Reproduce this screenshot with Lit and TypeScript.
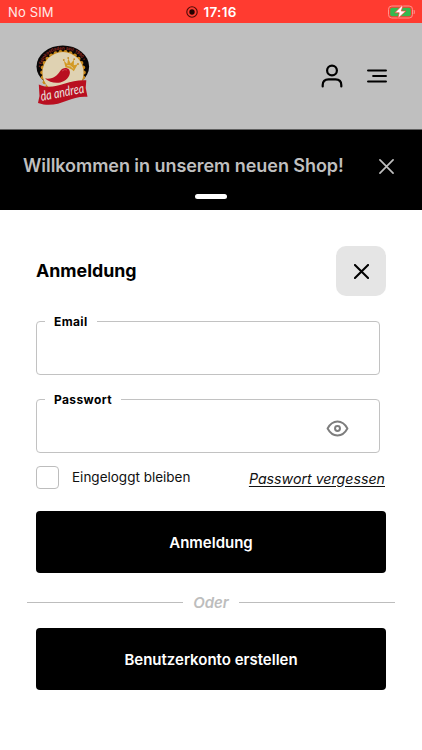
import { LitElement, html, css, svg } from "lit";
import { customElement, property } from "lit/decorators.js";

const cross = (size: number, width: number) => html`<svg width=${size} height=${size} viewBox="0 0 16 16" fill="none" stroke="currentColor" stroke-width=${width} stroke-linecap="round"><path d="M1 1L15 15M15 1L1 15"/></svg>`;

@customElement("shop-logo")
export class ShopLogo extends LitElement {
  static styles = css`
    :host { display: block; width: 54px; height: 62px; }
    svg { display: block; overflow: visible; }
    .arc { font: 700 4.6px "Open Sans", sans-serif; fill: #8f2a20; }
    .name { font: italic 500 13.5px "Lato", sans-serif; fill: #e6dcd8; }
  `;
  render() {
    const bumps = Array.from({ length: 26 }, (_, i) => {
      const a = (i * Math.PI) / 13;
      return svg`<circle cx=${27 + 20.8 * Math.cos(a)} cy=${27.6 + 20.8 * Math.sin(a)} r="2" fill="#c98a1d"/>`;
    });
    return html`<svg width="54" height="62" viewBox="0 0 54 62">
      <defs><path id="arc" d="M4.8 22.5C8 9.500 16 4.700 27 4.700S46 9.500 49.200 22.500"/></defs>
      <ellipse cx="26.800" cy="21.500" rx="26.300" ry="21" fill="#090606"/>
      <text class="arc"><textPath href="#arc" textLength="55">• Feinkostladen seit 1990 •</textPath></text>
      ${bumps}
      <circle cx="27" cy="27.600" r="21" fill="#c98a1d"/>
      <circle cx="27" cy="27.600" r="20.500" fill="#dfd2b2"/>
      <path d="M9 33.500C18 34.500 21 30.500 24 26.300C26.500 22.500 30.500 22 33 24.500C35.500 28 32.500 33.500 28 36C22 39.300 14 38 9 33.500Z" fill="#b90f20"/>
      <path d="M26 26Q29 23.700 31 25" stroke="#d95862" stroke-width=".7" fill="none"/>
      <path d="M29.500 22.500L27.800 15.500L31.200 19L32.200 13.500L34.700 18.500L38 14.700L37.800 20.300L41.800 19.300L37.800 26.200Q34 22.500 29.500 22.500Z" fill="#d39a25"/>
      <path d="M31.300 20.500L34.500 21L37.300 23.500" stroke="#dfd2b2" stroke-width=".9" fill="none"/>
      <g fill="#c98a1d"><circle cx="27.800" cy="15" r=".9"/><circle cx="32.200" cy="13" r=".9"/><circle cx="38.200" cy="14.200" r=".9"/><circle cx="42" cy="19" r=".9"/></g>
      <path d="M2.800 39.500C18 47 31 34 50.300 35.300L49.700 43L51.500 51.800C34 50 22 65 2 58L3.500 51Z" fill="#b90f20"/>
      <text class="name" transform="translate(5.500 56) rotate(-11)" textLength="44" lengthAdjust="spacingAndGlyphs">da andrea</text>
    </svg>`;
  }
}

@customElement("outlined-field")
export class OutlinedField extends LitElement {
  @property() label = "";
  static styles = css`
    :host { display: block; }
    .box { box-sizing: border-box; width: 344px; height: 62px; margin: 0; padding: 0 30px 2px 8px; border: 1px solid #c2c2c2; border-radius: 4px; display: flex; align-items: center; justify-content: flex-end; }
    .label { padding: 1px 9px 0; font: 700 12px/15px Inter, sans-serif; letter-spacing: .38px; color: #000; }
  `;
  render() {
    return html`<fieldset class="box"><legend class="label">${this.label}</legend><slot></slot></fieldset>`;
  }
}

@customElement("app-root")
export class AppRoot extends LitElement {
  static styles = css`
    :host { display: block; width: 422px; height: 750px; overflow: hidden; background: #fff; font-family: Inter, sans-serif; color: #000; }
    svg { display: block; }
    .status { height: 23px; box-sizing: border-box; background: #ff3b30; color: #fff; display: grid; grid-template-columns: 1fr auto 1fr; align-items: center; padding: 1px 7px 0 8px; font-size: 13px; }
    .carrier { color: #ffe9e7; letter-spacing: .15px; }
    .clock { display: flex; align-items: center; gap: 5px; font-weight: 600; font-size: 13.5px; letter-spacing: .3px; }
    .battery { justify-self: end; }
    .header { height: 107px; box-sizing: border-box; background: #bfbfbf; border-bottom: 1px solid #606060; display: flex; align-items: center; padding: 0 35px 0 36px; }
    .logo { margin-bottom: 1px; }
    .tools { margin: 0 0 1px auto; display: flex; align-items: center; gap: 24px; }
    .banner { height: 80px; box-sizing: border-box; background: #000; color: #bfbfbf; display: flex; flex-direction: column; align-items: center; padding-top: 23px; }
    .notice { box-sizing: border-box; width: 100%; padding: 0 28px 0 23px; display: flex; align-items: center; justify-content: space-between; height: 26px; }
    .welcome { font-size: 18px; font-weight: 600; letter-spacing: -.05px; white-space: nowrap; margin-top: -1px; }
    .handle { width: 32px; height: 5px; border-radius: 3px; background: #fff; margin-top: 15px; }
    .sheet { padding: 36px 36px 0; }
    .head { display: flex; justify-content: space-between; align-items: center; height: 50px; }
    .title { margin: -1px 0 0; font-size: 17.8px; font-weight: 700; }
    .close { width: 50px; height: 50px; padding: 0; border: 0; border-radius: 10px; background: #e5e5e5; color: #000; display: grid; place-items: center; }
    .email { margin-top: 17px; }
    .password { margin-top: 16px; }
    .options { display: flex; align-items: center; margin-top: 13px; height: 23px; font-size: 13.5px; }
    .check { box-sizing: border-box; width: 23px; height: 23px; border: 1px solid #bdbdbd; border-radius: 4px; }
    .stay { margin: -2px 0 0 13px; color: #111; }
    .forgot { margin: 0 1px 0 auto; font-size: 14.2px; font-style: italic; text-decoration: underline; text-underline-offset: 2px; color: #111; padding-top: 1px; }
    .action { display: block; width: 350px; height: 62px; padding: 0; border: 0; border-radius: 4px; background: #000; color: #fff; font: 600 15px Inter, sans-serif; margin-top: 22px; }
    .or { display: flex; align-items: center; gap: 10px; height: 20px; margin: 19px -9px -6px; color: #bdbdbd; font-size: 15px; font-weight: 600; font-style: italic; }
    .rule { flex: 1; height: 1px; background: #bdbdbd; }
  `;
  render() {
    return html`
      <div class="status">
        <span class="carrier">No SIM</span>
        <span class="clock">
          <svg width="12" height="12" viewBox="0 0 12 12"><circle cx="6" cy="6" r="5.200" fill="none" stroke="#4a0b07" stroke-width="1.100"/><circle cx="6" cy="6" r="2.700" fill="#250200"/></svg>
          <span>17:16</span>
        </span>
        <svg class="battery" width="27" height="14" viewBox="0 0 27 14"><rect x=".5" y="1" width="24" height="12" rx="3.300" fill="none" stroke="#ff938c"/><path d="M26 5v4q1.200-2 0-4" fill="#ff938c" stroke="#ff938c" stroke-width=".5"/><rect x="2.200" y="2.700" width="20.600" height="8.600" rx="1.800" fill="#34b94f"/><path d="M14 .5L6.800 7.800h4.400L9.800 13.500L18 6h-4.700L15 .5Z" fill="#fff" stroke="#ff3b30" stroke-width=".7"/></svg>
      </div>
      <div class="header">
        <shop-logo class="logo"></shop-logo>
        <div class="tools">
          <svg width="22" height="24" viewBox="0 0 22 24" fill="none" stroke="#000" stroke-width="2.200" stroke-linecap="round"><circle cx="11" cy="6.500" r="4.900"/><path d="M1.700 22.500V21Q1.700 15.300 7.500 15.300H14.500Q20.300 15.300 20.300 21V22.500"/></svg>
          <svg width="20" height="14" viewBox="0 0 20 14" fill="none" stroke="#000" stroke-width="2.200" stroke-linecap="round"><path d="M1.100 1.500H18.900M6.200 7H18.900M1.100 12.500H18.900"/></svg>
        </div>
      </div>
      <div class="banner">
        <div class="notice"><span class="welcome">Willkommen in unserem neuen Shop!</span>${cross(15, 1.8)}</div>
        <div class="handle"></div>
      </div>
      <div class="sheet">
        <div class="head"><h1 class="title">Anmeldung</h1><button class="close">${cross(15, 2.2)}</button></div>
        <outlined-field class="email" label="Email"></outlined-field>
        <outlined-field class="password" label="Passwort">
          <svg width="23" height="17" viewBox="0 0 24 18" fill="none" stroke="#7d7d7d" stroke-width="2.100"><path d="M1.500 9Q5.500 1.600 12 1.600T22.500 9Q18.500 16.400 12 16.400T1.500 9Z" stroke-linejoin="round"/><circle cx="12" cy="9" r="2.600"/></svg>
        </outlined-field>
        <div class="options"><span class="check"></span><span class="stay">Eingeloggt bleiben</span><span class="forgot">Passwort vergessen</span></div>
        <button class="action">Anmeldung</button>
        <div class="or"><span class="rule"></span><span>Oder</span><span class="rule"></span></div>
        <button class="action">Benutzerkonto erstellen</button>
      </div>`;
  }
}
